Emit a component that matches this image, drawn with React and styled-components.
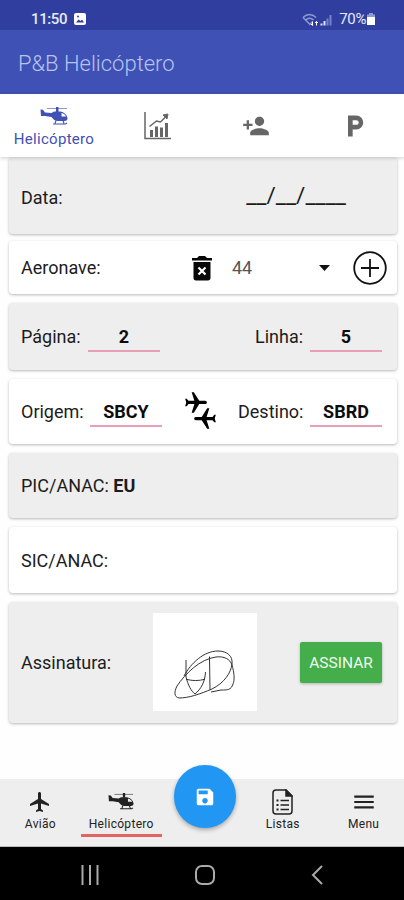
/* eslint-disable react/prop-types */
import React from 'react';
import styled, { createGlobalStyle } from 'styled-components';
import {
  MdFlight,
  MdLocalParking,
  MdMenu,
  MdPersonAdd,
  MdSave,
} from 'react-icons/md';

const GlobalStyle = createGlobalStyle`
  * {
    box-sizing: border-box;
  }

  body {
    margin: 0;
    background: #fefefe;
    font-family: Roboto, 'Liberation Sans', sans-serif;
  }

  svg {
    display: block;
    flex: none;
  }
`;

const Screen = styled.div`
  display: flex;
  flex-direction: column;
  width: 404px;
  height: 900px;
  overflow: hidden;
  color: #1c1c1c;
`;

const StatusBar = styled.div`
  display: flex;
  align-items: center;
  flex: none;
  height: 30px;
  padding: 8px 29px 0 31px;
  background: #303f9f;
  color: #e6eaf8;
  font-size: 15px;
  font-weight: 500;
`;

const Clock = styled.span`
  width: 43px;
  letter-spacing: -0.4px;
`;

const Battery = styled.span`
  margin: 0 1px 0 6px;
  font-size: 15px;
  font-weight: 400;
  letter-spacing: -0.4px;
`;

const Spacer = styled.span`
  flex: 1;
`;

const Toolbar = styled.header`
  display: flex;
  align-items: center;
  flex: none;
  height: 64px;
  padding: 2px 18px 0;
  background: #3f51b5;
  color: #b7c4ee;
  font-size: 22px;
  font-weight: 300;
`;

const Tabs = styled.nav`
  display: flex;
  flex: none;
  height: 63px;
  background: #fff;
  color: #666;
  box-shadow: 0 1px 4px rgba(0, 0, 0, 0.2);
  z-index: 1;
`;

const Tab = styled.div`
  display: flex;
  flex-direction: column;
  align-items: center;
  justify-content: center;
  width: ${({ $width }) => $width}px;
  padding-top: ${({ $active }) => ($active ? 4 : 0)}px;
  gap: 5px;
  color: ${({ $active }) => ($active ? '#3f51b5' : '#666')};
  font-size: 15px;
  line-height: 18px;
  letter-spacing: 0.3px;
`;

const Form = styled.main`
  display: flex;
  flex-direction: column;
  flex: 1;
  padding: 0 7px 0 9px;
`;

const Card = styled.section`
  display: flex;
  align-items: center;
  flex: none;
  height: ${({ $height }) => $height}px;
  margin-bottom: ${({ $gap }) => $gap || 9}px;
  padding: ${({ $top }) => $top || 0}px ${({ $right }) => $right || 15}px 0 12px;
  border-radius: 4px;
  background: ${({ $grey }) => ($grey ? '#eee' : '#fff')};
  box-shadow: 0 1px 3px rgba(0, 0, 0, 0.28);
  font-size: 18px;
`;

const Label = styled.span`
  flex: none;
  width: ${({ $width }) => ($width ? `${$width}px` : 'auto')};
  white-space: nowrap;
`;

const DateMask = styled.span`
  margin: -5px 36px 0 0;
  font-size: 22.5px;
`;

const Field = styled.span`
  width: 72px;
  height: 30px;
  border-bottom: 2px solid #e8a0b6;
  color: #0c0c0c;
  font-weight: 700;
  line-height: 29px;
  text-align: center;
`;

const Aircraft = styled.div`
  display: flex;
  align-items: center;
  justify-content: space-between;
  width: 98px;
  margin: 0 23px 0 19px;
  color: #555;
`;

const Planes = styled.div`
  display: grid;
  width: 34px;
  margin: -2px 0 0 21px;
  color: #000;

  svg:first-child {
    transform: rotate(90deg);
  }

  svg:last-child {
    margin: -11px 0 0 9px;
    transform: rotate(-90deg);
  }
`;

const Signature = styled.div`
  width: 104px;
  height: 98px;
  margin-top: -1px;
  background: #fff;
`;

const SignButton = styled.button`
  width: 82px;
  height: 41px;
  margin-left: auto;
  padding: 0;
  border: 0;
  border-radius: 2px;
  background: #43ae4a;
  box-shadow: 0 1px 3px rgba(0, 0, 0, 0.25);
  color: #effbef;
  font: 400 15.5px Roboto, sans-serif;
`;

const BottomBar = styled.nav`
  display: flex;
  flex: none;
  height: 68px;
  background: #eee;
  border-bottom: 1px solid #bbb;
`;

const NavItem = styled.div`
  display: flex;
  flex-direction: column;
  align-items: center;
  width: 81px;
  height: 58px;
  padding-top: 9px;
  border-bottom: 3px solid ${({ $active }) => ($active ? '#e2655f' : 'transparent')};
  color: #222;
  font-size: 12px;
  line-height: 18px;
  letter-spacing: 0.3px;
`;

const NavIcon = styled.div`
  display: flex;
  align-items: center;
  height: 27px;
`;

const SaveButton = styled.div`
  display: flex;
  align-items: center;
  justify-content: center;
  width: 63px;
  height: 63px;
  margin: -14px 6px 0 12px;
  border-radius: 50%;
  background: #2196f3;
  box-shadow: 0 2px 4px rgba(0, 0, 0, 0.3);
  color: #fff;
`;

const SystemBar = styled.footer`
  display: flex;
  align-items: center;
  flex: none;
  height: 53px;
  padding: 3px 81px 0;
  justify-content: space-between;
  background: #000;
`;

const HelicopterIcon = ({ width = 28 }) => (
  <svg width={width} height={(width * 18) / 28} viewBox="0 0 28 18" fill="currentColor">
    <path d="M7 1h20v1H7z" opacity=".6" />
    <path d="M16 0h2.5v5H16z" />
    <path d="M0.500 2.500l2.500.2L5 5.500l6.500.5L14 4.500h6.500c3.600.5 6.200 3 7 6.500.2 2-1 3-3 3H18c-3 0-4.500-1.500-6.500-4L5 9l-4 0zM21.500 6v3.500H26C25.200 7.600 23.800 6.500 21.500 6z" fillRule="evenodd" />
    <path d="M16 13.500l-1 3M23 13.500l1 3M13 17h12.500l1.500-1" fill="none" stroke="currentColor" strokeWidth="1.100" />
  </svg>
);

const ChartIcon = () => (
  <svg width="27" height="28" viewBox="0 0 27 28" fill="none" stroke="currentColor">
    <path d="M1 0v26.500h26" strokeWidth="1.500" />
    <path d="M7.500 18v7M12.500 14.500V25M17.500 15.500V25M22.500 11v14" strokeWidth="3" />
    <path d="M5.500 14.500l7-5.500 4 1 6-6" strokeWidth="1.500" />
    <path d="M19 3l5-1-1 5z" fill="currentColor" />
  </svg>
);

const TrashIcon = () => (
  <svg width="22" height="26" viewBox="0 0 22 26">
    <path d="M1 3h5l2-2h6l2 2h5v2.500H1zM2.500 7h17v16c0 1.500-1 2.500-2.500 2.500H5c-1.500 0-2.500-1-2.500-2.500z" fill="#080808" />
    <path d="M7.500 12.500l7 7m0-7l-7 7" stroke="#fff" strokeWidth="2.200" />
  </svg>
);

const AddIcon = () => (
  <svg width="34" height="34" viewBox="0 0 34 34" fill="none" stroke="#111" strokeWidth="1.800">
    <circle cx="17" cy="17" r="15.800" />
    <path d="M17 8v18M8 17h18" />
  </svg>
);

const ListIcon = () => (
  <svg width="21" height="26" viewBox="0 0 21 26" fill="none" stroke="#222" strokeWidth="1.500">
    <path d="M14 1H4C2 1 1 2 1 4v18c0 2 1 3 3 3h13c2 0 3-1 3-3V7z" />
    <path d="M14 1v6h6z" fill="#222" />
    <path d="M8.500 11.500H17M8.500 16H17M8.500 20.500H17" strokeWidth="1.700" />
    <path d="M4.500 11.500h2M4.500 16h2M4.500 20.500h2" strokeWidth="2" />
  </svg>
);

const PhotoIcon = () => (
  <svg width="12" height="12" viewBox="0 0 12 12">
    <rect width="12" height="12" rx="2" fill="#fff" />
    <path d="M2 9.500l2.500-3 2 1.500L8 6.500l2 3z" fill="#303f9f" />
    <circle cx="4" cy="3.500" r="1" fill="#303f9f" />
  </svg>
);

const SignalIcons = () => (
  <svg width="31" height="13" viewBox="0 0 31 13" fill="none">
    <path d="M1 4.500C5 .5 10 .5 14 4.500M3.500 7c3-2.500 5.500-2.500 8 0" stroke="#8e99d3" strokeWidth="1.500" />
    <path d="M1 4.500l7 7 2-2.500" stroke="#8e99d3" strokeWidth="1.500" />
    <path d="M10.500 8.500v4M9 11l1.500 1.500M14.500 12.500v-4M13 10l1.500-1.500L16 10" stroke="#fff" />
    <path d="M19.500 12.500v-2M22.500 12.500V8" stroke="#dfe4fa" strokeWidth="2" />
    <path d="M25.500 12.500v-7M28.500 12.500V2" stroke="#7683c8" strokeWidth="2" />
  </svg>
);

const BatteryIcon = () => (
  <svg width="8" height="12" viewBox="0 0 8 12">
    <path d="M2 0h4v1.500h2V12H0V1.500h2z" fill="#8e99d3" />
    <path d="M0 4h8v8H0z" fill="#fff" />
  </svg>
);

const SignatureDrawing = () => (
  <svg width="104" height="98" viewBox="0 0 104 98" fill="none" stroke="#333" strokeWidth="1">
    <path d="M33 47v17c2 8 5 14 9 17 6-5 10-12 10.500-22" />
    <path d="M33 66c5 2 14 2 19 0M56.500 43.500L57 77" />
    <path d="M31 63c7-13 20-25 34-25 9 0 15 5 14 13-1 9-8 19-20 25-12 5-23 9-33 9-5-1-5-6-2-12 8-12 23-27 39-29 8-1 14 2 16 8 2 7 3 15 1 19-2 6-5 6-12 6l-10 2" />
  </svg>
);

const App = () => (
  <>
    <GlobalStyle />
    <Screen>
      <StatusBar>
        <Clock>11:50</Clock>
        <PhotoIcon />
        <Spacer />
        <SignalIcons />
        <Battery>70%</Battery>
        <BatteryIcon />
      </StatusBar>
      <Toolbar>P&amp;B Helicóptero</Toolbar>
      <Tabs>
        <Tab $width={108} $active>
          <HelicopterIcon />
          Helicóptero
        </Tab>
        <Tab $width={99}>
          <ChartIcon />
        </Tab>
        <Tab $width={98}>
          <MdPersonAdd size={28} />
        </Tab>
        <Tab $width={99}>
          <MdLocalParking size={28} />
        </Tab>
      </Tabs>

      <Form>
        <Card $height={77} $gap={7} $top={4} $grey>
          <Label>Data:</Label>
          <Spacer />
          <DateMask>__/__/____</DateMask>
        </Card>
        <Card $height={53} $right={10}>
          <Label $width={170}>Aeronave:</Label>
          <TrashIcon />
          <Aircraft>
            44
            <svg width="11" height="6" viewBox="0 0 11 6">
              <path d="M0 0h11L5.500 6z" fill="#111" />
            </svg>
          </Aircraft>
          <AddIcon />
        </Card>
        <Card $height={67} $grey>
          <Label $width={67}>Página:</Label>
          <Field>2</Field>
          <Spacer />
          <Label $width={55}>Linha:</Label>
          <Field>5</Field>
        </Card>
        <Card $height={65}>
          <Label $width={69}>Origem:</Label>
          <Field>SBCY</Field>
          <Planes>
            <MdFlight size={26} />
            <MdFlight size={26} />
          </Planes>
          <Spacer />
          <Label $width={72}>Destino:</Label>
          <Field>SBRD</Field>
        </Card>
        <Card $height={65} $grey>
          <Label>
            PIC/ANAC: <b>EU</b>
          </Label>
        </Card>
        <Card $height={66}>
          <Label>SIC/ANAC:</Label>
        </Card>
        <Card $height={121} $grey>
          <Label $width={132}>Assinatura:</Label>
          <Signature>
            <SignatureDrawing />
          </Signature>
          <SignButton>ASSINAR</SignButton>
        </Card>
      </Form>

      <BottomBar>
        <NavItem>
          <NavIcon>
            <MdFlight size={24} />
          </NavIcon>
          Avião
        </NavItem>
        <NavItem $active>
          <NavIcon>
            <HelicopterIcon width={26} />
          </NavIcon>
          Helicóptero
        </NavItem>
        <SaveButton>
          <MdSave size={22} />
        </SaveButton>
        <NavItem>
          <NavIcon>
            <ListIcon />
          </NavIcon>
          Listas
        </NavItem>
        <NavItem>
          <NavIcon>
            <MdMenu size={26} />
          </NavIcon>
          Menu
        </NavItem>
      </BottomBar>
      <SystemBar>
        <svg width="18" height="20" viewBox="0 0 18 20" stroke="#aaa" strokeWidth="2">
          <path d="M1.500 0v20M9 0v20M16.500 0v20" />
        </svg>
        <svg width="20" height="20" viewBox="0 0 20 20" fill="none" stroke="#aaa" strokeWidth="2">
          <rect x="1" y="1" width="18" height="18" rx="6" />
        </svg>
        <svg width="12" height="20" viewBox="0 0 12 20" fill="none" stroke="#aaa" strokeWidth="2">
          <path d="M11 1l-9 9 9 9" />
        </svg>
      </SystemBar>
    </Screen>
  </>
);

export default App;
